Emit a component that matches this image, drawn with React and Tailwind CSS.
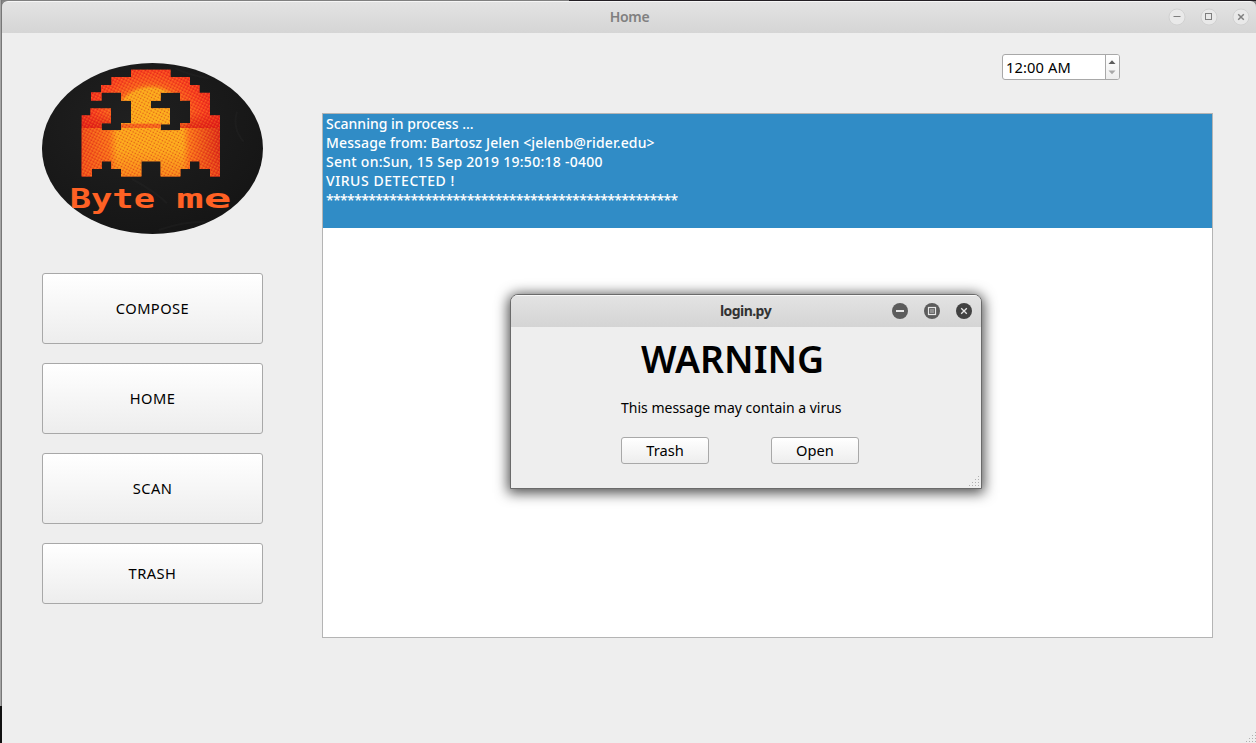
import React from 'react';

const GHOST =
  'M297 43H416V66H474V90H503V113H534V181H564V365H534V342H503V319H474V342H445V365H386V319H328V365H267V342H238V319H209V342H180V365H148V181H175V160H237V205H209V226H267V204H297V137H267V113H209V137H177V112H207V90H238V66H297Z' +
  'M386 113V137H357V160H414V208H386V226H444V204H474V137H444V113Z';

function Logo() {
  return (
    <svg viewBox="30 24 663 513" className="block h-[171px] w-[221px]">
      <defs>
        <radialGradient id="cloth" cx="0.4" cy="0.35" r="0.7">
          <stop offset="0" stopColor="#202020" />
          <stop offset="1" stopColor="#151515" />
        </radialGradient>
        <radialGradient id="top" cx="350" cy="215" r="225" gradientUnits="userSpaceOnUse">
          <stop offset="0" stopColor="#fb7a1c" />
          <stop offset="0.45" stopColor="#fa6a1c" />
          <stop offset="0.75" stopColor="#f8381e" />
          <stop offset="1" stopColor="#e81c1c" />
        </radialGradient>
        <radialGradient id="sun" cx="355" cy="205" r="125" gradientUnits="userSpaceOnUse">
          <stop offset="0" stopColor="#fdac1c" />
          <stop offset="0.84" stopColor="#fba61c" />
          <stop offset="0.9" stopColor="#fa7a1a" stopOpacity="0.6" />
          <stop offset="1" stopColor="#f8501a" stopOpacity="0" />
        </radialGradient>
        <linearGradient id="low" x1="148" y1="0" x2="564" y2="0" gradientUnits="userSpaceOnUse">
          <stop offset="0" stopColor="#f0461a" />
          <stop offset="0.2" stopColor="#fa6c1a" />
          <stop offset="0.26" stopColor="#fda41c" />
          <stop offset="0.73" stopColor="#fda81c" />
          <stop offset="0.78" stopColor="#fb701a" />
          <stop offset="1" stopColor="#dc2418" />
        </linearGradient>
        <linearGradient id="fade" x1="0" y1="280" x2="0" y2="375" gradientUnits="userSpaceOnUse">
          <stop offset="0" stopColor="#f4501a" stopOpacity="0" />
          <stop offset="1" stopColor="#f4501a" stopOpacity="0.5" />
        </linearGradient>
        <linearGradient id="shade" x1="0" y1="170" x2="0" y2="219" gradientUnits="userSpaceOnUse">
          <stop offset="0" stopColor="#dc1414" stopOpacity="0" />
          <stop offset="1" stopColor="#dc1414" stopOpacity="0.8" />
        </linearGradient>
        <pattern id="dots" width="9" height="9" patternUnits="userSpaceOnUse" patternTransform="rotate(28)">
          <circle cx="2.5" cy="2.5" r="1.8" fill="#ffd02a" opacity="0.75" />
          <circle cx="7" cy="7" r="1.9" fill="#c51818" opacity="0.7" />
        </pattern>
        <clipPath id="oval">
          <ellipse cx="361.5" cy="280.5" rx="331.5" ry="256.5" />
        </clipPath>
        <clipPath id="ghost">
          <path d={GHOST} clipRule="evenodd" />
        </clipPath>
      </defs>
      <g clipPath="url(#oval)">
        <rect x="30" y="24" width="663" height="513" fill="url(#cloth)" />
        <g fill="none" stroke="#2c2c2c" strokeWidth="6" opacity="0.25">
          <path d="M300 372Q370 410 405 445M615 170Q600 220 635 260M380 525Q450 500 520 500M430 40Q470 60 530 70" />
        </g>
        <g clipPath="url(#ghost)">
          <rect x="148" y="43" width="416" height="322" fill="url(#top)" />
          <rect x="148" y="43" width="416" height="177" fill="url(#sun)" />
          <rect x="148" y="170" width="119" height="49" fill="url(#shade)" />
          <rect x="444" y="170" width="120" height="49" fill="url(#shade)" />
          <rect x="148" y="219" width="416" height="146" fill="url(#low)" />
          <rect x="148" y="280" width="416" height="85" fill="url(#fade)" />
          <rect x="267" y="206" width="119" height="13" fill="#f6601c" />
          <rect x="148" y="43" width="416" height="322" fill="url(#dots)" />
        </g>
        <g fill="#ff6124" fontFamily="'DejaVu Sans Mono', monospace" fontWeight="700" fontSize="80">
          <text x="113" y="459" textLength="256" lengthAdjust="spacingAndGlyphs">Byte</text>
          <text x="433" y="459" textLength="165" lengthAdjust="spacingAndGlyphs">me</text>
        </g>
      </g>
    </svg>
  );
}

function NavButton({ children, short }) {
  return (
    <button
      className={
        (short ? 'h-[61px]' : 'h-[71px]') +
        ' w-[221px] rounded-[3px] border border-[#a8a8a8] bg-linear-to-b from-white to-[#ededed] pb-[2px] text-[14.67px] leading-[20px] tracking-[0.45px] text-black'
      }
    >
      {children}
    </button>
  );
}

function WindowIcon({ kind, active }) {
  const close = kind === 'close';
  const disc = active ? (close ? '#414141' : '#5c5c5c') : '#e9e9e9';
  const ink = active ? '#e6e6e6' : '#7e7e7e';
  return (
    <svg viewBox="0 0 18 18" className="h-[18px] w-[18px]">
      <circle cx="9" cy="9" r="8" fill={disc} stroke={active ? 'none' : '#cdcdcd'} strokeWidth="0.8" />
      {kind === 'min' && <path d={active ? 'M5 9H13' : 'M5.5 8.5H12.5'} stroke={ink} strokeWidth={active ? 2 : 1} />}
      {kind === 'max' && active && (
        <>
          <rect x="5.5" y="5.5" width="7" height="7" fill="#5c5c5c" stroke={ink} strokeWidth="1.2" />
          <rect x="7" y="7" width="4" height="4" fill="#909090" />
        </>
      )}
      {kind === 'max' && !active && <rect x="5.5" y="5.5" width="6" height="6" fill="none" stroke={ink} strokeWidth="1" />}
      {close && <path d="M6.2 6.2L11.8 11.8M11.8 6.2L6.2 11.8" stroke={ink} strokeWidth={active ? 1.3 : 1.5} />}
    </svg>
  );
}

function Controls({ active }) {
  return (
    <div className="flex gap-[14px]">
      <WindowIcon kind="min" active={active} />
      <WindowIcon kind="max" active={active} />
      <WindowIcon kind="close" active={active} />
    </div>
  );
}

function Grip({ className }) {
  const dots = [[9, 0], [6, 3], [9, 3], [3, 6], [6, 6], [9, 6], [0, 9], [3, 9], [6, 9], [9, 9]];
  return (
    <svg viewBox="0 0 10 10" className={'h-[10px] w-[10px] ' + className}>
      {dots.map(([x, y]) => (
        <rect key={x + '-' + y} x={x} y={y} width="1" height="1" fill="#b0b0b0" />
      ))}
    </svg>
  );
}

function Dialog() {
  return (
    <div className="absolute top-[294px] left-[510px] flex h-[195px] w-[472px] flex-col overflow-hidden rounded-t-[8px] border border-[#6a6a6a] bg-[#eeeeee] shadow-[0_2px_13px_2px_rgba(0,0,0,0.7)]">
      <div className="grid h-[32px] shrink-0 grid-cols-[1fr_auto_1fr] items-center border-t border-[#f8f8f8] bg-linear-to-b from-[#e3e3e3] to-[#d4d4d4] pr-[8px] pb-[2px]">
        <span />
        <span className="ml-[7px] text-[14px] font-bold tracking-[-0.55px] text-[#333333]">login.py</span>
        <div className="flex justify-end">
          <Controls active />
        </div>
      </div>
      <div className="pt-[7px] pl-[130px] text-[37.3px] leading-[50px] font-semibold text-black">WARNING</div>
      <div className="mt-[14px] pl-[110px] text-[14px] leading-[20px] text-black">This message may contain a virus</div>
      <div className="mt-[19px] flex gap-[62px] pl-[110px]">
        {['Trash', 'Open'].map((label) => (
          <button
            key={label}
            className="h-[27px] w-[88px] rounded-[3px] border border-[#a8a8a8] bg-linear-to-b from-white to-[#ededed] pb-[2px] text-[14.67px] leading-[20px] text-black"
          >
            {label}
          </button>
        ))}
      </div>
      <Grip className="absolute right-[2px] bottom-[2px]" />
    </div>
  );
}

export default function App() {
  return (
    <div className="relative flex h-[743px] w-[1256px] overflow-hidden bg-[#eeeeee] font-['Noto_Sans',sans-serif]">
      <div className="flex w-[2px] shrink-0 flex-col">
        <div className="flex h-[706px]">
          <div className="w-px bg-[#a5a5a5]" />
          <div className="w-px bg-[#777777]" />
        </div>
        <div className="flex-1 bg-[#111111]" />
      </div>
      <div className="flex flex-1 flex-col">
        <div className="flex h-px shrink-0">
          <div className="w-[567px] bg-[#808080]" />
          <div className="flex-1 bg-[#231f24]" />
        </div>
        <div className="h-[32px] shrink-0 bg-[#888888]">
          <div className="grid h-full grid-cols-[1fr_auto_1fr] items-center rounded-t-[6px] border-t border-[#f6f6f6] bg-linear-to-b from-[#e3e3e3] to-[#d5d5d5] pr-[6px] pb-[2px]">
            <span />
            <span className="ml-[7px] text-[14px] font-semibold tracking-[-0.3px] text-[#808080]">Home</span>
            <div className="flex justify-end">
              <Controls />
            </div>
          </div>
        </div>
        <div className="flex flex-1">
          <div className="ml-[40px] flex w-[221px] flex-col pt-[30px]">
            <Logo />
            <div className="mt-[39px] flex flex-col gap-[19px]">
              <NavButton>COMPOSE</NavButton>
              <NavButton>HOME</NavButton>
              <NavButton>SCAN</NavButton>
              <NavButton short>TRASH</NavButton>
            </div>
          </div>
          <div className="ml-[59px] flex w-[891px] flex-col pt-[21px]">
            <div className="ml-[680px] flex h-[26px] w-[118px] overflow-hidden rounded-[3px] border border-[#a8a8a8] bg-white">
              <div className="w-[103px] border-r border-[#a8a8a8] pl-[3px] text-[14.67px] leading-[25px] tracking-[0.12px] text-black">12:00 AM</div>
              <svg viewBox="0 0 13 24" className="h-[24px] w-[13px] bg-linear-to-b from-white to-[#eeeeee]">
                <path d="M2.5 9L6 5.2L9.5 9Z" fill="#5c5c5c" />
                <path d="M2.5 15.5L6 19.3L9.5 15.5Z" fill="#a8a8a8" />
              </svg>
            </div>
            <div className="mt-[33px] h-[525px] border border-[#b4b4b4] bg-white">
              <div className="h-[114px] bg-[#308cc6] pl-[3px] text-[14px] leading-[19px] font-medium text-white">
                <div>Scanning in process ...</div>
                <div className="tracking-[0.14px]">Message from: Bartosz Jelen &lt;jelenb@rider.edu&gt;</div>
                <div className="tracking-[0.26px]">Sent on:Sun, 15 Sep 2019 19:50:18 -0400</div>
                <div className="tracking-[0.56px]">VIRUS DETECTED !</div>
                <div className="tracking-[-0.64px]">**************************************************</div>
              </div>
            </div>
          </div>
        </div>
      </div>
      <Grip className="absolute right-0 bottom-[1px]" />
      <Dialog />
    </div>
  );
}
